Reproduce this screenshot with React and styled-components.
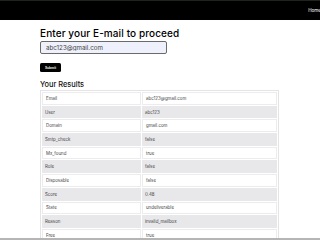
import React from 'react';
import styled, { createGlobalStyle } from 'styled-components';

const GlobalStyle = createGlobalStyle`
  html, body {
    margin: 0;
    padding: 0;
    background: #ffffff;
    font-family: Inter, "Noto Sans", sans-serif;
    -webkit-font-smoothing: antialiased;
    overflow: hidden;
  }
`;

const NavBar = styled.div`
  height: 19px;
  background: #000000;
  border-top: 1px solid #1d241d;
  display: flex;
  align-items: center;
  justify-content: flex-end;
  overflow: hidden;
`;

const NavLink = styled.span`
  color: #ffffff;
  font-size: 4.6px;
  margin-right: -1px;
  white-space: nowrap;
`;

const Main = styled.div`
  padding: 7px 0 0 40px;
  width: 240px;
`;

const HeadText = styled.h2`
  margin: 0;
  font-size: 10px;
  font-weight: 500;
  line-height: 13px;
  color: #000000;
  letter-spacing: 0.1px;
`;

const EmailInput = styled.input`
  display: block;
  box-sizing: border-box;
  margin-top: 1px;
  width: 127px;
  height: 13px;
  padding: 0 0 0 5px;
  font-family: inherit;
  font-size: 6.2px;
  color: #444;
  background: #eef0fb;
  border: 1px solid #6a6a6a;
  border-radius: 2px;
  outline: none;
`;

const SubmitButton = styled.button`
  display: block;
  margin-top: 9px;
  width: 21px;
  height: 9px;
  padding: 0;
  background: #000000;
  color: #ffffff;
  font-family: inherit;
  font-size: 3.3px;
  font-weight: 600;
  border: none;
  border-radius: 1.5px;
`;

const SubHead = styled.h3`
  margin: 8px 0 0;
  font-size: 7.4px;
  font-weight: 500;
  line-height: 9px;
  color: #111111;
`;

const ResultTable = styled.table`
  margin-top: 1px;
  width: 239px;
  border-collapse: separate;
  border-spacing: 1px;
  border: 1px solid #e4e4e6;
  font-size: 4.4px;
  color: #444;
`;

const Row = styled.tr`
  background: ${(p) => (p.$striped ? '#e8e7ea' : '#ffffff')};
`;

const Cell = styled.td`
  height: 12.7px;
  box-sizing: border-box;
  padding: 0 0 0 3px;
  border: ${(p) => (p.$striped ? 'none' : '0.5px solid #ececee')};
  width: ${(p) => (p.$first ? '99px' : 'auto')};
  white-space: nowrap;
`;

const BottomLine = styled.div`
  position: fixed;
  left: 0;
  right: 0;
  bottom: 0;
  height: 2px;
  background: #b5b5b5;
`;

const results = [
  ['Email', 'abc123@gmail.com'],
  ['User', 'abc123'],
  ['Domain', 'gmail.com'],
  ['Smtp_check', 'false'],
  ['Mx_found', 'true'],
  ['Role', 'false'],
  ['Disposable', 'false'],
  ['Score', '0.48'],
  ['State', 'undeliverable'],
  ['Reason', 'invalid_mailbox'],
  ['Free', 'true'],
];

export default function App() {
  return (
    <div>
      <GlobalStyle />
      <NavBar>
        <NavLink>Home</NavLink>
      </NavBar>
      <Main>
        <HeadText>Enter your E-mail to proceed</HeadText>
        <EmailInput type="text" defaultValue="abc123@gmail.com" />
        <SubmitButton type="button">Submit</SubmitButton>
        <SubHead>Your Results</SubHead>
        <ResultTable>
          <tbody>
            {results.map(([key, value], i) => (
              <Row key={key} $striped={i % 2 === 1}>
                <Cell $first $striped={i % 2 === 1}>{key}</Cell>
                <Cell $striped={i % 2 === 1}>{value}</Cell>
              </Row>
            ))}
          </tbody>
        </ResultTable>
      </Main>
      <BottomLine />
    </div>
  );
}
